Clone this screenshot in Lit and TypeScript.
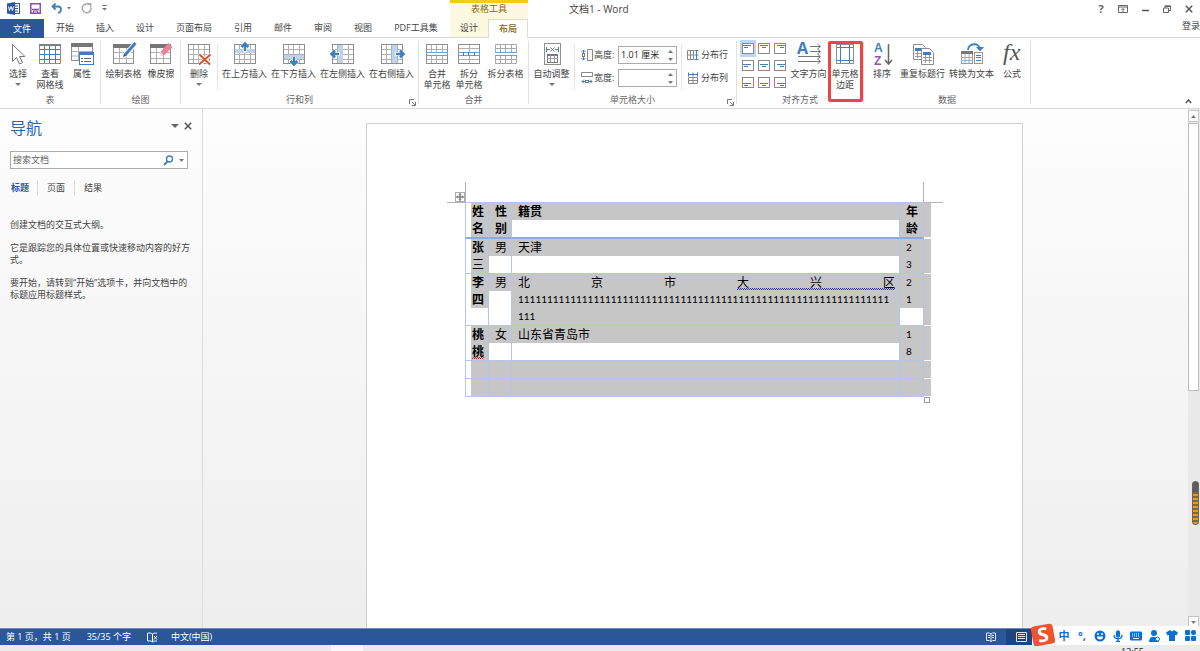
import { LitElement, html, css, svg, nothing, TemplateResult } from "lit";
import { customElement, property } from "lit/decorators.js";
import { classMap } from "lit/directives/class-map.js";

const G = "#8f8f8f";
const B = "#3f7fbf";

/* ---------- ribbon icons, drawn on a 24 x 22 canvas ---------- */
const box = (inner: TemplateResult, w = 24, h = 22) =>
  html`<svg width=${w} height=${h} viewBox="0 0 ${w} ${h}" fill="none" aria-hidden="true">${inner}</svg>`;

const lattice = (stroke = "#b0b0b0") => svg`
  <rect x="1.5" y="1.5" width="21" height="19" fill="#fff" stroke=${G}/>
  <path d="M6.5 2v18M11.5 2v18M17.5 2v18M2 6.5h20M2 11.5h20M2 16.5h20" stroke=${stroke}/>`;

const icons: Record<string, () => TemplateResult> = {
  select: () => box(svg`<path d="M6.500 1.500v17l4-4 3 6.500 3-1.400-3-6.100h5.500z" fill="#fff" stroke="#777"/>`),
  gridlines: () => box(svg`
    <rect x="1.500" y="1.500" width="21" height="19" fill="#fff" stroke=${G}/>
    <path d="M1 2h22" stroke="#808080" stroke-width="2"/>
    <path d="M6.500 3v17M11.500 3v17M17.500 3v17M2 6.500h20M2 11.500h20M2 16.500h20" stroke=${B}/>`),
  props: () => box(svg`
    <rect x="1.500" y="0.500" width="21" height="17" fill="#fff" stroke=${G}/>
    <path d="M1 2h22" stroke="#777" stroke-width="4"/><path d="M2 8.500h20M2 13h20M8.500 4v13" stroke="#b0b0b0"/>
    <rect x="9.500" y="9.500" width="14" height="12" fill="#fff" stroke=${B}/>
    <path d="M9 10.500h15" stroke=${B} stroke-width="3"/>
    <path d="M11 15.500h2M11 18.500h2M14 15.500h7M14 18.500h7" stroke="#666"/>`),
  draw: () => box(svg`
    <rect x="1.500" y="1.500" width="20" height="19" fill="#fff" stroke=${G}/>
    <path d="M1 3h21" stroke="#777" stroke-width="4"/><path d="M7.500 5v15M14.500 5v15M2 9.500h19M2 15.500h19" stroke="#b0b0b0"/>
    <path d="M24 0 13 12" stroke="#fff" stroke-width="5"/><path d="M23.500 0 13 12" stroke=${B} stroke-width="3"/><path d="m11 14 1-3.500 2.500 2.200z" fill="#235f9e"/>`),
  erase: () => box(svg`
    <rect x="1.500" y="1.500" width="20" height="19" fill="#fff" stroke=${G}/>
    <path d="M1 3h21" stroke="#777" stroke-width="4"/><path d="M7.500 5v15M14.500 5v15M2 9.500h19M2 15.500h19" stroke="#b0b0b0"/>
    <path d="m19.500 0 4 4-8.500 8.500h-2.500L10.500 10z" fill="#e8829c"/><path d="m10.500 9.500 2.500 3h2l-3.500-4z" fill="#f9d3dc"/>`),
  remove: () => box(svg`${lattice()}
    <path d="m12.500 11.500 11 10M23.500 11.500l-11 10" stroke="#fff" stroke-width="4"/>
    <path d="m12.500 11.500 10.500 10M23.500 11.500l-11.500 10" stroke="#d9532c" stroke-width="2"/>`),
  above: () => box(svg`${lattice()}<path d="M2 6h20v4H2z" fill="#bcd3ea"/>
    <path d="M12 9V2M8.500 4.500 12 1l3.500 3.500" stroke="#fff" stroke-width="4"/><path d="M12 8V0M8.500 4 12 .5 15.500 4" stroke=${B} stroke-width="2.500"/>`),
  below: () => box(svg`${lattice()}<path d="M2 12h20v4H2z" fill="#bcd3ea"/>
    <path d="M12 14v7M8.500 17.500 12 21l3.500-3.500" stroke="#fff" stroke-width="4"/><path d="M12 14v8M8.500 18 12 21.500l3.500-3.500" stroke=${B} stroke-width="2.500"/>`),
  left: () => box(svg`${lattice()}<path d="M7 2h5v18H7z" fill="#bcd3ea"/>
    <path d="M1 11h8M4.500 7.500 1 11l3.500 3.500" stroke="#fff" stroke-width="4"/><path d="M0 11h8M4 7.500.5 11 4 14.500" stroke=${B} stroke-width="2.500"/>`),
  right: () => box(svg`${lattice()}<path d="M12 2h5v18h-5z" fill="#bcd3ea"/>
    <path d="M23 11h-8M19.500 7.500 23 11l-3.500 3.500" stroke="#fff" stroke-width="4"/><path d="M24 11h-8M20 7.500l3.500 3.500-3.500 3.500" stroke=${B} stroke-width="2.500"/>`),
  merge: () => box(svg`${lattice()}<rect x="1.500" y="9.500" width="21" height="3" fill="#fff" stroke="#6ba0d4"/>`),
  split: () => box(svg`
    <rect x="1.500" y="1.500" width="21" height="19" fill="#fff" stroke=${G}/>
    <path d="M12.500 2v18M2 5.500h20M2 16.500h20" stroke="#b0b0b0"/>
    <rect x="1.500" y="9.500" width="21" height="3" fill="#fff" stroke="#6ba0d4"/><path d="M6.500 9v4M11.500 9v4M17.500 9v4" stroke=${B}/>`),
  splitTable: () => box(svg`
    <path d="M1.500 9V1.500h21V9M6.500 1v8M11.500 1v8M17.500 1v8M1 5.500h22M1.500 13v7.500h21V13M6.500 13v7M11.500 13v7M17.500 13v7M1 16.500h22" stroke="#a8a8a8"/>
    <path d="M1 9.500h22M1 12.500h22" stroke="#6ba0d4"/>`),
  autofit: () => box(svg`
    <rect x="4.500" y="0.500" width="16" height="21" fill="#fff" stroke=${G}/>
    <path d="M6.500 4v5M18.500 4v5M7 6.500h3M15 6.500h3" stroke=${B}/><path d="m10.500 4.500 4 4m0-4-4 4" stroke="#777"/>
    <rect x="7.500" y="11.500" width="10" height="8" stroke="#777"/><path d="M7 12h11" stroke="#777" stroke-width="2"/><path d="M10.500 12v7M14.500 12v7M7 15.500h11" stroke="#999"/>`),
  direction: () => box(svg`
    <path d="M13 3.500h10M13 8.500h10M1 13.500h22M1 18.500h22" stroke="#777"/>
    <path d="m20.500 1 3 2.500-3 2.500M20.500 6l3 2.500-3 2.500M20.500 11l3 2.500-3 2.500M20.500 16l3 2.500-3 2.500" stroke="#777"/>
    <text x="0" y="11" class="ga">A</text>`),
  margins: () => box(svg`
    <rect x="3.500" y="1.500" width="17" height="19" fill="#fff" stroke=${G}/>
    <path d="M7.500 2v18M16.500 2v18M4 4.500h16M4 17.500h16" stroke=${B}/>`),
  sort: () => box(svg`
    <text x="4" y="9" class="gs">A</text><text x="4" y="22" class="gs z">Z</text>
    <path d="M18.500 1v20M15 17l3.500 4 3.500-4" stroke="#666" stroke-width="1.500"/>`),
  repeat: () => box(svg`
    <path d="M2.500 1.500h9l3 3v12h-12z" fill="#fff" stroke=${G}/><path d="M4 5h8v3H4z" fill=${B}/>
    <path d="M4 10.500h8M4 13.500h8M6.500 8v7" stroke="#999"/>
    <path d="M10.500 5.500h8l4 4v12h-12z" fill="#fff" stroke=${G}/><path d="M12 9h8v3h-8z" fill=${B}/>
    <path d="M12 14.500h9M12 17.500h9M14.500 12v8M18.500 12v8" stroke="#999"/>`),
  convert: () => box(svg`
    <path d="M8 7c0-7 11-8 12-1" stroke=${B} stroke-width="2"/><path d="M16 4h8l-4 4.500z" fill=${B}/>
    <rect x="1.500" y="9.500" width="11" height="11" fill="#fff" stroke="#999"/><path d="M1 9.500h12" stroke="#777" stroke-width="3"/>
    <path d="M5 11v9M9 11v9M1 14.500h12M1 17.500h12" stroke="#8fb0d2"/>
    <rect x="14.500" y="9.500" width="8" height="11" fill="#fff" stroke="#999"/><path d="M16 12.500h5M16 14.500h5M16 17.500h5" stroke=${B}/>`),
  fx: () => box(svg`<text x="3" y="17" class="fx">fx</text>`),
};

@customElement("ribbon-button")
class RibbonButton extends LitElement {
  @property() icon = "";
  @property() label = "";
  @property() second = "";
  @property() size = "s";
  @property({ type: Boolean }) menu = false;
  static styles = css`
    :host { display: block; }
    button {
      display: flex; flex-direction: column; align-items: center;
      padding: 5px 0 0; border: 0; background: none; color: #444;
      font: 9px/11px "Open Sans", "Noto Sans CJK SC", sans-serif; white-space: nowrap;
    }
    .s { width: 32px; } .m { width: 34px; } .l { width: 41px; } .xl { width: 49px; }
    svg { display: block; margin-bottom: 3px; overflow: visible; }
    .caret { border: solid transparent; border-width: 3px 3px 0; border-top-color: #777; margin-top: 4px; }
    .ga { font: bold 16px "Open Sans", sans-serif; fill: #3f7fbf; }
    .gs { font: bold 12px "Liberation Sans", sans-serif; fill: #3f7fbf; }
    .z { fill: #8e56b5; }
    .fx { font: italic 24px "Liberation Serif", serif; fill: #555; }
  `;
  render() {
    return html`<button class=${this.size}>
      ${icons[this.icon]()}<span>${this.label}</span>
      ${this.second ? html`<span>${this.second}</span>` : nothing}
      ${this.menu ? html`<i class="caret"></i>` : nothing}
    </button>`;
  }
}

@customElement("ribbon-group")
class RibbonGroup extends LitElement {
  @property() label = "";
  @property({ type: Boolean }) launcher = false;
  static styles = css`
    :host { display: flex; flex-direction: column; position: relative; padding: 0 3px 0 2px; flex: none; }
    :host::after { content: ""; position: absolute; right: 0; top: 3px; bottom: 4px; width: 1px; background: #e1e1e1; }
    .body { display: flex; flex: 1; }
    .foot { font-size: 9px; line-height: 14px; text-align: center; color: #666; padding-bottom: 1px; }
    button { position: absolute; right: 3px; bottom: 2px; border: 0; padding: 0; background: none; line-height: 0; }
  `;
  render() {
    return html`<div class="body"><slot></slot></div><div class="foot">${this.label}</div>
      ${this.launcher ? html`<button aria-label="${this.label}选项">
        <svg width="7" height="7" fill="none" stroke="#777"><path d="M.5 5V.5H5M3 3l3 3M6.500 3v3.500H3"/></svg></button>` : nothing}`;
  }
}

const alignIcon = (col: number, row: number) => {
  const y = [2.5, 4.5, 6.5][row];
  const a = [2, 3, 4][col];
  const b = [2, 4, 6][col];
  return html`<svg width="12" height="11" fill="none" aria-hidden="true">
    <rect x=".5" y=".5" width="11" height="10" fill="#fff" stroke="#8a8a8a"/>
    <path d="M${a - 1} ${y}h8M${b} ${y + 2}h4" stroke=${B}/></svg>`;
};

@customElement("doc-table")
class DocTable extends LitElement {
  static styles = css`
    :host { display: block; position: relative; }
    table { width: 100%; table-layout: fixed; border-spacing: 0; font: 12px/17px "Lato", "Noto Sans CJK SC", sans-serif; color: #000; }
    .c1 { width: 24px; } .c2 { width: 23px; } .c4 { width: 24px; } .c5 { width: 7px; }
    td, th { padding: 0; vertical-align: top; text-align: left; font-weight: 400;
      border-right: 1px solid #b4c6e7; border-bottom: 1px solid #b4c6e7; }
    tr > :first-child { border-left: 1px solid #b4c6e7; padding-left: 5px; }
    thead th { border-bottom: 2px solid #8eaadb; font-weight: 700; border-top: 1px solid #b4c6e7; }
    tr > .end { border-right: 0; border-color: #fff; background: #c6c6c6; }
    .line { height: 17px; padding-left: 6px; white-space: nowrap; }
    tr > :first-child .line { padding-left: 1px; }
    .on { background: #c6c6c6; }
    .bold { font-weight: 700; }
    .num { font-size: 10px; }
    .spread { text-align: justify; text-align-last: justify; padding-right: 4px; white-space: normal; }
    .grammar, .typo {
      --ink: #2a2ad0;
      background:
        linear-gradient(90deg, var(--ink) 50%, transparent 50%) 0 100% / 2px 1px repeat-x,
        linear-gradient(90deg, var(--ink) 50%, transparent 50%) 1px calc(100% - 1px) / 2px 1px repeat-x;
    }
    .typo { --ink: #e02020; }
    .mark { position: absolute; background: #b5b5b5; }
    .tl { left: 0; top: -20px; width: 1px; height: 20px; }
    .tr { right: 7px; top: -20px; width: 1px; height: 20px; }
    .hl { left: -18px; top: 0; width: 18px; height: 1px; }
    .hr { right: -12px; top: 0; width: 19px; height: 1px; }
    .move { position: absolute; left: -10px; top: -10px; width: 10px; height: 10px; padding: 0; border: 0; background: none; line-height: 0; }
    .grip { position: absolute; right: 1px; bottom: -6px; width: 6px; height: 6px; padding: 0; border: 1px solid #999; background: #fff; }
  `;
  private line(text: unknown, on = true, extra = "") {
    return html`<div class="line ${on ? "on" : ""} ${extra}">${text}</div>`;
  }
  render() {
    const l = this.line;
    return html`
      <table>
        <colgroup><col class="c1" /><col class="c2" /><col /><col class="c4" /><col class="c5" /></colgroup>
        <thead><tr>
          <th>${l("姓")}${l("名")}</th><th>${l("性")}${l("别")}</th>
          <th>${l("籍贯")}${l("", false)}</th><th>${l("年")}${l("龄")}</th><th class="end"></th>
        </tr></thead>
        <tbody>
          <tr><td>${l("张", true, "bold")}${l("三")}</td><td>${l("男")}${l("", false)}</td>
            <td>${l("天津")}${l("", false)}</td><td>${l("2", true, "num")}${l("3", true, "num")}</td><td class="end"></td></tr>
          <tr><td>${l("李", true, "bold")}${l("四", true, "bold")}</td><td>${l("男")}</td>
            <td>${l(html`北京市<span class="grammar">大兴区</span>`, true, "spread")}
              ${l("1".repeat(64), true, "num")}${l("111", true, "num")}</td>
            <td>${l("2", true, "num")}${l("1", true, "num")}</td><td class="end"></td></tr>
          <tr><td>${l("桃", true, "bold")}${l(html`<span class="typo">桃</span>`, true, "bold")}</td><td>${l("女")}${l("", false)}</td>
            <td>${l("山东省青岛市")}${l("", false)}</td><td>${l("1", true, "num")}${l("8", true, "num")}</td><td class="end"></td></tr>
          ${[0, 1].map(() => html`<tr>${[0, 1, 2, 3].map(() => html`<td>${l("")}</td>`)}<td class="end"></td></tr>`)}
        </tbody>
      </table>
      <i class="mark tl"></i><i class="mark tr"></i><i class="mark hl"></i><i class="mark hr"></i>
      <button class="move" aria-label="移动表格"><svg width="10" height="10" fill="none"><rect x=".5" y=".5" width="9" height="9" fill="#fff" stroke="#aaa"/><path d="M5 1.500v7M1.500 5h7" stroke="#555"/><path d="M3.800 3 5 1.500 6.200 3M3.800 7 5 8.500 6.200 7M3 3.800 1.500 5 3 6.200M7 3.800 8.500 5 7 6.200" stroke="#555" stroke-width=".7"/></svg></button>
      <button class="grip" aria-label="调整表格大小"></button>`;
  }
}

@customElement("app-root")
class AppRoot extends LitElement {
  static styles = css`
    :host { display: flex; flex-direction: column; height: 100vh; overflow: hidden; position: relative; background: #fff;
      color: #444; font: 9px/12px "Open Sans", "Noto Sans CJK SC", sans-serif; }
    * { box-sizing: border-box; }
    button { font: inherit; color: inherit; border: 0; padding: 0; background: none; }
    svg { display: block; }
    a { color: inherit; text-decoration: none; }

    header { display: flex; height: 38px; flex: none; }
    .main { width: 450px; display: flex; flex-direction: column; border-bottom: 1px solid #d9d9d9; }
    .quick { display: flex; align-items: center; height: 19px; padding: 0 0 3px 7px; gap: 10px; }
    .undo { display: flex; align-items: center; gap: 5px; }
    .tabs { display: flex; flex: 1; }
    .tab { padding: 0 11px; white-space: nowrap; }
    .file { background: #2b579a; color: #fff; width: 44px; margin-right: 1px; margin-bottom: -1px; }
    .context { width: 78px; display: flex; flex-direction: column; background: #fdf8e0; border-top: 3px solid #f4cb16; }
    .ctitle { text-align: center; color: #8a6a0a; height: 16px; }
    .ctabs { display: flex; flex: 1; }
    .ctabs button { flex: 1; border-bottom: 1px solid #d9d9d9; }
    .ctabs .on { background: #fff; color: #8a6a0a; font-weight: 500; border: 1px solid #e3dcc0; border-bottom: 0; }
    .window { flex: 1; display: flex; flex-direction: column; border-bottom: 1px solid #d9d9d9; }
    .caption { display: flex; align-items: center; height: 18px; padding-left: 41px; }
    .title { flex: 1; font-size: 10px; }
    .controls { display: flex; }
    .controls button { width: 22px; display: flex; justify-content: center; font-weight: 700; font-size: 11px; color: #666; align-items: center; }
    .login { align-self: flex-end; line-height: 16px; }

    .ribbon { display: flex; height: 71px; flex: none; border-bottom: 1px solid #d9d9d9; position: relative; }
    .sep { width: 1px; background: #e6e6e6; margin: 6px 2px 3px; }
    .collapse { position: absolute; right: 8px; bottom: 4px; }
    .size { display: grid; grid-template-columns: 12px 23px 59px; column-gap: 1px; row-gap: 5px; padding: 8px 2px 0 4px; align-content: start; align-items: center; }
    .spin { display: flex; height: 18px; border: 1px solid #ababab; }
    .spin input { flex: 1; min-width: 0; border: 0; padding: 0 0 0 2px; font: inherit; color: #222; outline: 0; background: none; }
    .arrows { display: flex; flex-direction: column; justify-content: space-around; padding-right: 3px; }
    .arrows button { line-height: 0; }
    .dist { display: flex; flex-direction: column; gap: 5px; padding: 8px 6px 0 3px; }
    .dist button { display: flex; height: 18px; align-items: center; gap: 2px; }
    .align { display: grid; grid-template-columns: repeat(3, 16px); grid-auto-rows: 17px; align-content: start; padding: 2px 0 0 1px; }
    .align button { display: grid; place-items: center; }
    .align .on { background: #c3d6f0; }
    .target { position: relative; }
    .target::after { content: ""; box-sizing: border-box; position: absolute; left: -1px; right: -2px; top: 3px; height: 61px; border: 3px solid #ef4444; border-radius: 2px; pointer-events: none; }

    .work { display: flex; flex: 1; min-height: 0; background: linear-gradient(#fdfdfd, #eee); }
    nav { width: 203px; flex: none; border-right: 1px solid #dcdcdc; padding: 9px 10px 0; display: flex; flex-direction: column; }
    .nhead { display: flex; align-items: center; height: 20px; }
    h1 { flex: 1; margin: 0; font-size: 16px; line-height: 20px; font-weight: 400; color: #2f65b0; }
    .nhead div { display: flex; gap: 5px; padding-bottom: 4px; align-items: center; }
    .search { display: flex; align-items: center; border: 1px solid #ababab; background: #fff; height: 18px; margin: 13px 4px 0 0; padding-right: 3px; gap: 5px; }
    .search input { flex: 1; min-width: 0; border: 0; outline: 0; background: none; font: inherit; padding: 0 0 0 2px; }
    .search input::placeholder { color: #666; opacity: 1; }
    .ntabs { display: flex; margin: 11px 0 23px; line-height: 16px; }
    .ntabs button { padding: 0 9px; border-left: 1px solid #ddd; }
    .ntabs .on { border: 0; padding-left: 1px; padding-right: 8px; color: #2b579a; font-weight: 700; }
    p { margin: 0 0 11px; }
    .canvas { flex: 1; min-width: 0; display: flex; justify-content: center; padding: 14px 17px 0 15px; }
    .page { flex: 0 1 657px; background: #fff; border: 1px solid #cfcfcf; border-bottom: 0; padding: 78px 91px 0 98px; }
    .scroll { width: 12px; flex: none; display: flex; flex-direction: column; background: #e9e9e9; position: relative; gap: 1px; padding: 1px 1px 0 0; }
    .scroll button { height: 12px; border: 1px solid #c4c4c4; background: #fff; display: grid; place-items: center; }
    .track { flex: 1; }
    .thumb { height: 54.5%; background: #fff; border: 1px solid #bdbdbd; }
    .gauge { position: absolute; right: 1px; top: 372px; width: 7px; height: 44px; border-radius: 3px; border: 1px solid #666;
      background: linear-gradient(#5c5c5c 10px, transparent 10px), repeating-linear-gradient(#e8981c 0 2px, #80683c 2px 4px); }

    .status { display: flex; align-items: center; height: 17px; flex: none; background: #2b579a; color: #fff; padding-left: 6px; border-top: 1px solid #6f8dba; }
    .status span { margin-right: 16px; white-space: pre; }
    .status .proof { margin-right: 13px; }
    .views { margin-left: auto; display: flex; align-self: stretch; padding-right: 164px; }
    .views button { width: 30px; display: grid; place-items: center; }
    .views .on { background: #1f4480; }
    .desktop { height: 6px; flex: none; overflow: hidden; text-align: right; padding: 1px 56px 0 0; line-height: 12px; color: #222;
      background: linear-gradient(90deg, #ebebeb 331px, #f8f8f8 331px 363px, #ebebeb 363px); }
    .ime { position: absolute; right: 0; bottom: 6px; display: flex; align-items: center; height: 19px; background: #fff; color: #0b6fd6; padding: 0 1px 0 23px; }
    .ime button { width: 18px; display: grid; place-items: center; font-weight: 700; font-size: 11px; }
    .logo { position: absolute; left: 0; bottom: 0; width: 22px; height: 20px; border-radius: 3px; background: #f0532d; transform: rotate(-10deg);
      color: #fff; font: bold 20px/20px "Open Sans", sans-serif; text-align: center; }
  `;

  private caret = html`<svg width="5" height="3"><path d="M0 0h5L2.500 3z" fill="#777"/></svg>`;

  private spinner(label: string, id: string, value: string, icon: TemplateResult) {
    return html`${icon}<label for=${id}>${label}</label>
      <div class="spin"><input id=${id} .value=${value} />
        <div class="arrows">
          <button aria-label="增加${label}"><svg width="5" height="3"><path d="M0 3h5L2.500 0z" fill="#777"/></svg></button>
          <button aria-label="减少${label}">${this.caret}</button>
        </div></div>`;
  }

  private header() {
    const tabs = ["开始", "插入", "设计", "页面布局", "引用", "邮件", "审阅", "视图", "PDF工具集"];
    return html`<header>
      <div class="main">
        <div class="quick">
          <svg width="13" height="13"><rect x="6.500" y="1.500" width="6" height="10" fill="#fff" stroke="#2b579a"/><path d="M8 4h3M8 6.500h3M8 9h3" stroke="#2b579a"/><path d="M0 1.500 8 0v13l-8-1.500z" fill="#2b579a"/><path d="m1.500 4.500 1 4 1.500-4 1.500 4 1-4" stroke="#fff" fill="none"/></svg>
          <button aria-label="保存"><svg width="11" height="11" fill="none"><path d="M.8.8h9.500v9.500H.8z" stroke="#8650a8" stroke-width="1.500"/><path d="M2 6.500h7" stroke="#8650a8" stroke-width="1.500"/><path d="M3.500 10V8h4v2" stroke="#8650a8"/></svg></button>
          <button class="undo" aria-label="撤消"><svg width="11" height="11" fill="none" stroke="#3f7fbf" stroke-width="1.800"><path d="M4.500.5 1.500 3.500l3 3M1.500 3.500H7c4 0 4 5.500 0 6.500"/></svg><svg width="4" height="3"><path d="M0 0h4L2 2.500z" fill="#777"/></svg></button>
          <button aria-label="重复"><svg width="11" height="11" fill="none" stroke="#a8a8a8" stroke-width="1.400"><path d="M8.500 2A4.400 4.400 0 1 0 10 5M5.500.8H9.700V4.500"/></svg></button>
          <button aria-label="自定义快速访问工具栏"><svg width="5" height="6"><path d="M0 .5h5" stroke="#777"/><path d="M0 3h5L2.500 5.500z" fill="#777"/></svg></button>
        </div>
        <div class="tabs"><button class="file">文件</button>${tabs.map((t) => html`<button class="tab">${t}</button>`)}</div>
      </div>
      <div class="context"><div class="ctitle">表格工具</div>
        <div class="ctabs"><button>设计</button><button class="on">布局</button></div></div>
      <div class="window">
        <div class="caption"><div class="title">文档1 - Word</div>
          <div class="controls">
            <button aria-label="帮助">?</button>
            <button aria-label="功能区显示选项"><svg width="10" height="8" fill="none" stroke="#666"><path d="M.5.5h9v7h-9zM0 2h10M5 7V3.500M3.500 5 5 3.500 6.500 5"/></svg></button>
            <button aria-label="最小化"><svg width="7" height="8"><path d="M0 5.500h7" stroke="#555" stroke-width="1.500"/></svg></button>
            <button aria-label="还原"><svg width="8" height="8" fill="none" stroke="#666"><path d="M.5 3h5v4.500h-5zM2 3V.8h5.500V5.500h-2M2 1.500h5.500"/></svg></button>
            <button aria-label="关闭"><svg width="8" height="8" stroke="#555" stroke-width="1.500"><path d="m.8.8 6.400 6.400M7.200.8.8 7.200"/></svg></button>
          </div></div>
        <a class="login" href="#">登录</a>
      </div>
    </header>`;
  }

  private ribbon() {
    const b = (icon: string, label: string, size = "s", second = "", menu = false) =>
      html`<ribbon-button icon=${icon} label=${label} size=${size} second=${second} ?menu=${menu}></ribbon-button>`;
    const names = ["左", "中", "右"], rows = ["靠上", "中部", "靠下"];
    return html`<div class="ribbon">
      <ribbon-group label="表">${b("select", "选择", "s", "", true)}${b("gridlines", "查看", "s", "网格线")}${b("props", "属性")}</ribbon-group>
      <ribbon-group label="绘图">${b("draw", "绘制表格", "l")}${b("erase", "橡皮擦", "m")}</ribbon-group>
      <ribbon-group label="行和列" launcher>${b("remove", "删除", "s", "", true)}<i class="sep"></i>${b("above", "在上方插入", "xl")}${b("below", "在下方插入", "xl")}${b("left", "在左侧插入", "xl")}${b("right", "在右侧插入", "xl")}</ribbon-group>
      <ribbon-group label="合并">${b("merge", "合并", "s", "单元格")}${b("split", "拆分", "s", "单元格")}${b("splitTable", "拆分表格", "l")}</ribbon-group>
      <ribbon-group label="单元格大小" launcher>${b("autofit", "自动调整", "l", "", true)}<i class="sep"></i>
        <div class="size">
          ${this.spinner("高度:", "h", "1.01 厘米", html`<svg width="12" height="12" fill="none"><path d="M2.500 1v10M.5 3l2-2 2 2M.5 9l2 2 2-2" stroke=${B}/><rect x="1.500" y="4.500" width="2" height="3" fill="#fff" stroke="#777"/><path d="M6.500.5h5v11h-5zM6.500.5v11" stroke="#888"/></svg>`)}
          ${this.spinner("宽度:", "w", "", html`<svg width="12" height="12" fill="none"><path d="M.5.5h11v4H.5z" stroke="#888"/><path d="M1 9.500h10M3 7.500l-2 2 2 2M9 7.500l2 2-2 2" stroke=${B}/><rect x="4.500" y="8.500" width="3" height="2" fill="#fff" stroke="#777"/></svg>`)}
        </div><i class="sep"></i>
        <div class="dist">
          <button><svg width="12" height="12" fill="none"><path d="M.5 1.500h6v9h-6zM0 6h7M3.500 2v9" stroke="#888"/><path d="M9.500 1v10M7.500 1.500h4M7.500 6h4M7.500 10.500h4" stroke=${B}/></svg>分布行</button>
          <button><svg width="12" height="12" fill="none"><path d="M1.500 5.500h9v6h-9zM6 5v7M1 8.500h10" stroke="#888"/><path d="M1 2.500h10M1.500.5v4M6 .5v4M10.500.5v4" stroke=${B}/></svg>分布列</button>
        </div></ribbon-group>
      <ribbon-group label="对齐方式">
        <div class="align">${[0, 1, 2].map((r) => [0, 1, 2].map((c) => html`<button class=${classMap({ on: r + c === 0 })} aria-label="${rows[r]}${names[c]}对齐">${alignIcon(c, r)}</button>`))}</div>
        ${b("direction", "文字方向", "l")}<div class="target">${b("margins", "单元格", "s", "边距")}</div></ribbon-group>
      <ribbon-group label="数据">${b("sort", "排序")}${b("repeat", "重复标题行", "xl")}${b("convert", "转换为文本", "xl")}${b("fx", "公式")}</ribbon-group>
      <button class="collapse" aria-label="折叠功能区"><svg width="7" height="5" fill="none" stroke="#555" stroke-width="1.500"><path d="m.8 4 2.700-3 2.700 3"/></svg></button>
    </div>`;
  }

  private ime() {
    const u = "#0b6fd6";
    return html`<div class="ime">
      <span class="logo">S</span>
      <button>中</button><button>°,</button>
      <button aria-label="表情"><svg width="12" height="12"><circle cx="6" cy="6" r="5.500" fill=${u}/><path d="M3 6.500h6a3 3 0 0 1-6 0z" fill="#fff"/><circle cx="4" cy="4" r="1" fill="#fff"/><circle cx="8" cy="4" r="1" fill="#fff"/></svg></button>
      <button aria-label="语音"><svg width="10" height="12" fill="none" stroke=${u} stroke-width="1.300"><rect x="3.500" y="1" width="3" height="6" rx="1.500" fill=${u}/><path d="M1 5c0 5 8 5 8 0M5 9v3M3 11.500h4"/></svg></button>
      <button aria-label="键盘"><svg width="12" height="10"><rect y=".5" width="12" height="9" rx="1" fill=${u}/><path d="M2 3h8M2 5h8" stroke="#fff" stroke-dasharray="1 1"/><path d="M3 7.500h6" stroke="#fff"/></svg></button>
      <button aria-label="账户"><svg width="11" height="12"><circle cx="5" cy="3" r="3" fill=${u}/><path d="M0 12c0-7 8-7 10 0z" fill=${u}/><circle cx="8.500" cy="9" r="2" fill="#fff" stroke=${u}/></svg></button>
      <button aria-label="皮肤"><svg width="12" height="11"><path d="m4 0 2 1.500L8 0l4 2.500-1.500 3L9 5v6H3V5l-1.500.5L0 2.500z" fill=${u}/></svg></button>
      <button aria-label="工具箱"><svg width="11" height="11" fill=${u}><rect width="5" height="5" rx="1"/><rect x="6" width="5" height="5" rx="2"/><rect y="6" width="5" height="5" rx="1"/><rect x="6" y="6" width="5" height="5" rx="1"/></svg></button>
    </div>`;
  }

  render() {
    return html`${this.header()}${this.ribbon()}
      <div class="work">
        <nav>
          <div class="nhead"><h1>导航</h1><div>
            <button aria-label="任务窗格选项"><svg width="8" height="4"><path d="M0 0h8L4 4z" fill="#666"/></svg></button>
            <button aria-label="关闭"><svg width="8" height="8" stroke="#555" stroke-width="1.500"><path d="m.8.8 6.400 6.400M7.200.8.8 7.200"/></svg></button></div></div>
          <div class="search"><input placeholder="搜索文档" aria-label="搜索文档" />
            <button aria-label="搜索"><svg width="11" height="11" fill="none" stroke=${B}><circle cx="6.500" cy="4" r="3" stroke-width="1.400"/><path d="M4.500 6.500 1 10" stroke-width="2"/></svg></button>
            <button aria-label="搜索选项">${this.caret}</button></div>
          <div class="ntabs"><button class="on">标题</button><button>页面</button><button>结果</button></div>
          <p>创建文档的交互式大纲。</p>
          <p>它是跟踪您的具体位置或快速移动内容的好方式。</p>
          <p>要开始，请转到“开始”选项卡，并向文档中的标题应用标题样式。</p>
        </nav>
        <main class="canvas"><div class="page"><doc-table></doc-table></div></main>
        <div class="scroll">
          <button aria-label="向上滚动"><svg width="5" height="3"><path d="M0 3h5L2.500 0z" fill="#777"/></svg></button>
          <div class="track"><div class="thumb"></div></div>
          <button aria-label="向下滚动">${this.caret}</button>
          <i class="gauge"></i>
        </div>
      </div>
      <div class="status">
        <span>第 1 页，共 1 页</span><span>35/35 个字</span>
        <span class="proof"><svg width="11" height="11" fill="none" stroke="#fff"><path d="M5.500 2v8M5.500 2C4 .8 2 .8.500 1.200V9c2-.4 4 0 5 1 1-1 2-1 4.500-1M5.500 2c1-.8 2-1 4.500-.8M7 4l3 3.500M10 4 7 7.500"/></svg></span>
        <span>中文(中国)</span>
        <div class="views">
          <button aria-label="阅读视图"><svg width="10" height="10" fill="none" stroke="#dce6f5"><path d="M5 1.500v8M.5 1h3L5 2l1.500-1h3v7.500h-3L5 9.500 3.500 8.500h-3zM2 3.500h2M2 5.500h2M6 3.500h2M6 5.500h2"/></svg></button>
          <button class="on" aria-label="页面视图"><svg width="11" height="10" fill="none" stroke="#dce6f5"><path d="M.5.500h10v9H.5zM2 2.500h7M2 4.500h7M2 6.500h7"/></svg></button>
        </div>
      </div>
      <div class="desktop">13:55</div>
      ${this.ime()}`;
  }
}
